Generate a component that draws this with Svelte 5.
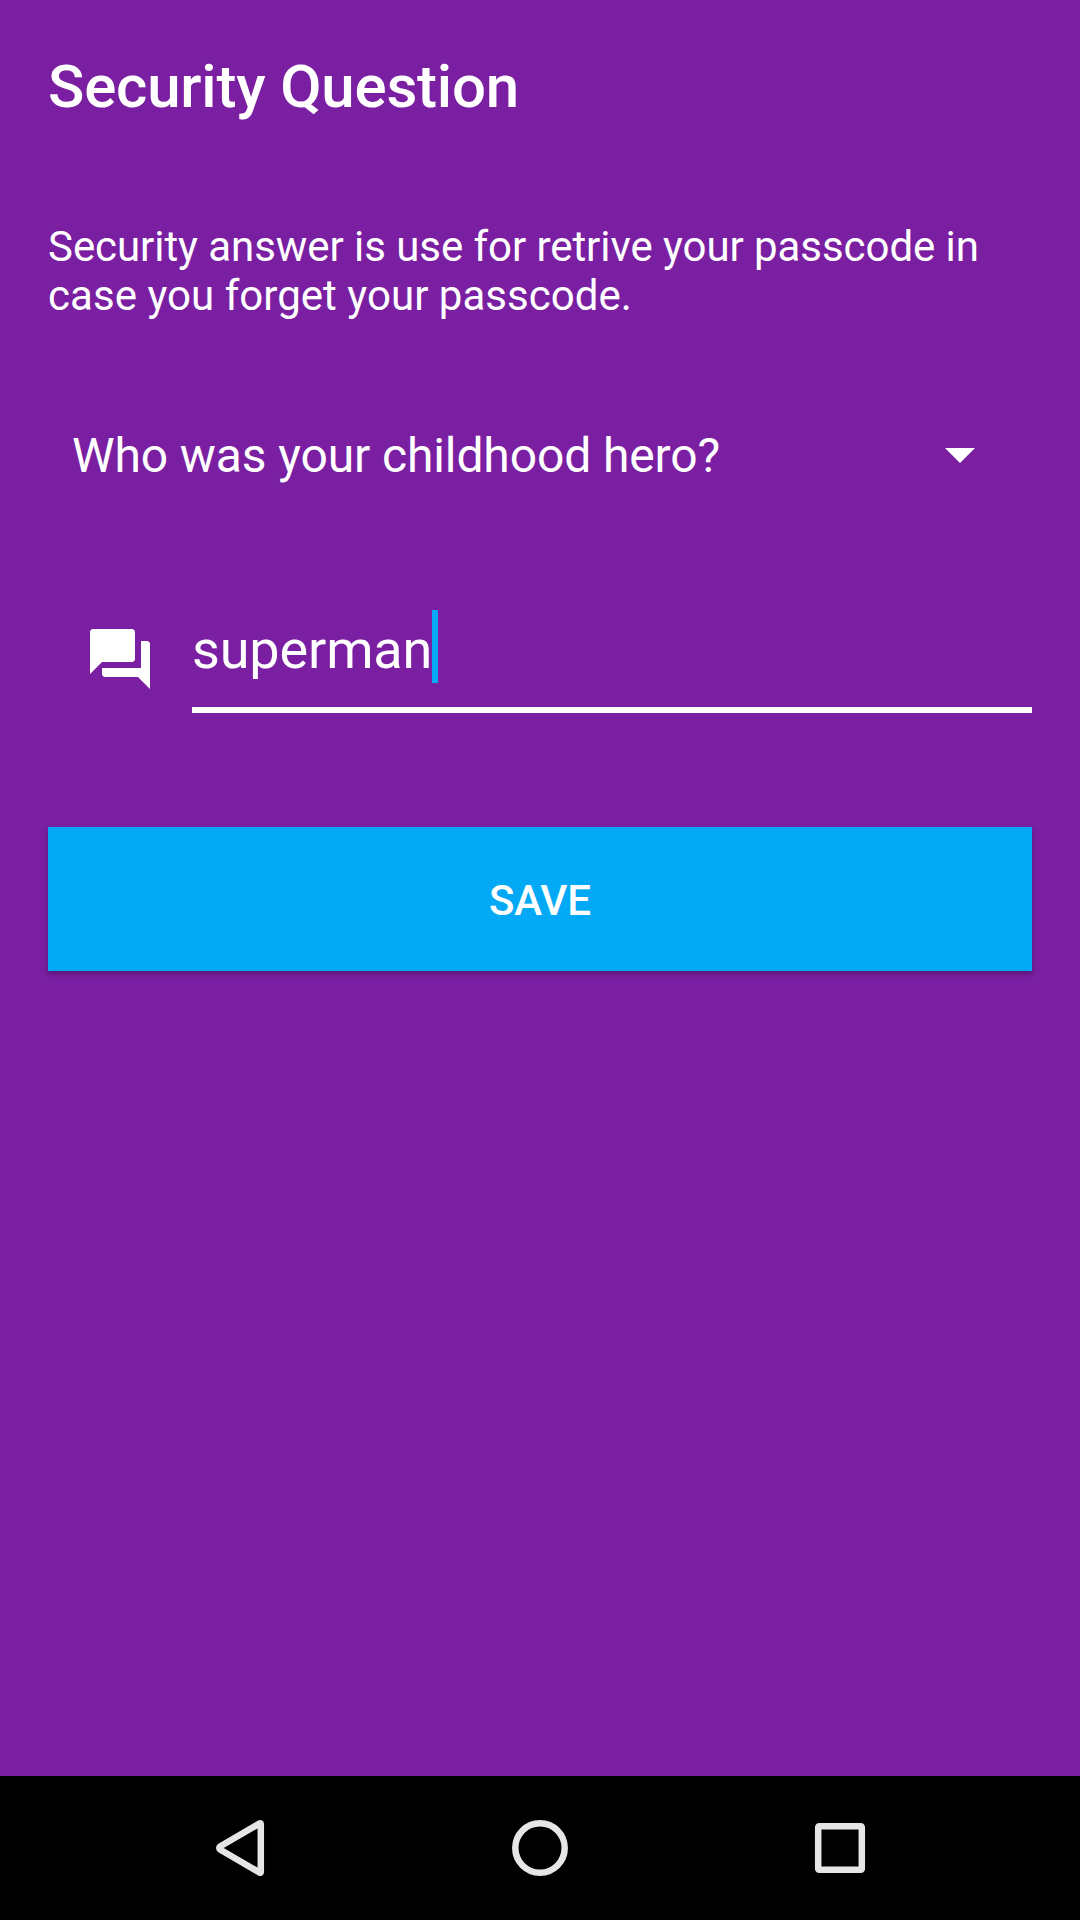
<script>
  const question = "Who was your childhood hero?";
  let answer = "superman";
  let saved = false;

  const save = () => {
    if (answer != "") {
      saved = true;
    }
  };
</script>

<style>
  :global(body) {
    background: #7b1fa2;
  }

  .screen {
    display: flex;
    flex-direction: column;
    height: 1920px;
    color: white;
    font-family: Roboto, sans-serif;
    background: #7b1fa2;
  }

  main {
    flex: 1;
    padding: 51px 48px 0 48px;
  }

  h1 {
    margin: 0;
    font-size: 60px;
    font-weight: 500;
    line-height: 71px;
    letter-spacing: -0.2px;
  }

  .description {
    margin: 100px 0 0 0;
    font-size: 42px;
    line-height: 49px;
    letter-spacing: 0.04px;
  }

  .description::first-line {
    letter-spacing: -0.06px;
  }

  .spinner {
    display: flex;
    align-items: center;
    justify-content: space-between;
    height: 144px;
    margin-top: 63px;
    padding: 0 57px 0 24px;
    font-size: 48px;
    letter-spacing: -0.12px;
  }

  .arrow {
    display: block;
    width: 30px;
    height: 15px;
  }

  .answer-row {
    display: flex;
    align-items: flex-end;
    height: 109px;
    margin-top: 77px;
  }

  .answer-icon {
    width: 72px;
    height: 72px;
    margin: 0 36px 18px 36px;
  }

  .field {
    display: flex;
    flex: 1;
    align-items: flex-start;
    height: 103px;
    border-bottom: 6px solid white;
    font-size: 54px;
    line-height: 92px;
    letter-spacing: -0.15px;
  }

  .cursor {
    width: 6px;
    height: 73px;
    margin-top: 6px;
    background: #03a9f4;
  }

  .save-btn {
    display: block;
    width: 100%;
    height: 144px;
    margin-top: 114px;
    padding: 2px 0 0 0;
    border: none;
    background: #03a9f4;
    box-shadow: 0 3px 6px rgba(0, 0, 0, 0.3);
    color: white;
    font-family: inherit;
    font-size: 42px;
    font-weight: 500;
    letter-spacing: -0.1px;
  }

  nav {
    display: flex;
    justify-content: center;
    height: 144px;
    background: black;
  }

  .nav-btn {
    width: 300px;
    padding: 0;
    border: none;
    background: none;
  }

  .nav-btn svg {
    display: block;
    margin: 0 auto;
    fill: none;
    stroke: #e6e6e6;
    stroke-width: 6.5;
    stroke-linejoin: round;
  }
</style>

<div class="screen">
  <main>
    <h1>Security Question</h1>
    <p class="description">
      Security answer is use for retrive your passcode in case you forget your passcode.
    </p>

    <div class="spinner">
      <span>{question}</span>
      <svg class="arrow" viewBox="0 0 30 15">
        <path d="M0 0h30L15 15z" fill="white" />
      </svg>
    </div>

    <div class="answer-row">
      <svg class="answer-icon" viewBox="0 0 24 24" fill="white">
        <path d="M21 6h-2v9H6v2c0 .55.45 1 1 1h11l4 4V7c0-.55-.45-1-1-1zm-4 6V3c0-.55-.45-1-1-1H3c-.55 0-1 .45-1 1v14l4-4h10c.55 0 1-.45 1-1z" />
      </svg>
      <div class="field">
        <span>{answer}</span>
        <span class="cursor"></span>
      </div>
    </div>

    <button class="save-btn" disabled={saved} on:click={save}>SAVE</button>
  </main>

  <nav>
    <button class="nav-btn" aria-label="Back">
      <svg width="60" height="60" viewBox="0 0 60 60">
        <path d="M49.800 5.400q1-.6 1 .6v48q0 1.200-1 .6L10 31.500q-1.500-1.500 0-3z" />
      </svg>
    </button>
    <button class="nav-btn" aria-label="Home">
      <svg width="60" height="60" viewBox="0 0 60 60">
        <circle cx="30" cy="30" r="24.700" />
      </svg>
    </button>
    <button class="nav-btn" aria-label="Recent apps">
      <svg width="60" height="60" viewBox="0 0 60 60">
        <rect x="8.200" y="8.200" width="43.600" height="43.600" rx="1" />
      </svg>
    </button>
  </nav>
</div>
